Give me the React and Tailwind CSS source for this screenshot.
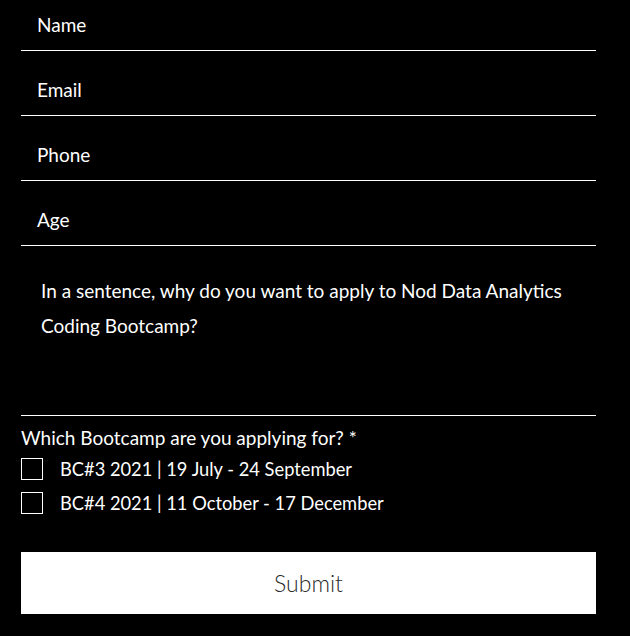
import React from "react";

export default function App() {
  const fields = ["Email", "Phone", "Age"];
  return (
    <div className="min-h-screen w-full bg-black text-white font-['Lato',sans-serif]">
      <div className="ml-[21px] w-[575px]">
        <div className="h-[51px] border-b border-white flex items-end pb-[13px] pl-4 text-[19px] leading-6">
          Name
        </div>
        {fields.map((f) => (
          <div
            key={f}
            className="h-[65px] border-b border-white flex items-end pb-[13px] pl-4 text-[19px] leading-6"
          >
            {f}
          </div>
        ))}
        <div className="h-[170px] border-b border-white pt-[27px] px-5 text-[19px] leading-[35px]">
          In a sentence, why do you want to apply to Nod Data Analytics
          <br />
          Coding Bootcamp?
        </div>
        <div className="mt-[10px] text-[19px] leading-6">Which Bootcamp are you applying for? *</div>
        <div className="mt-[2px]">
          {["BC#3 2021 | 19 July - 24 September", "BC#4 2021 | 11 October - 17 December"].map((t) => (
            <div key={t} className="h-[34px] flex items-center">
              <div className="w-[22px] h-[22px] border border-white shrink-0" />
              <span className="ml-[17px] text-[18.3px] leading-6">{t}</span>
            </div>
          ))}
        </div>
        <div className="mt-[32px] h-[62px] bg-white flex items-center justify-center text-[23px] font-light text-[#2a2a2a]">
          Submit
        </div>
      </div>
    </div>
  );
}
